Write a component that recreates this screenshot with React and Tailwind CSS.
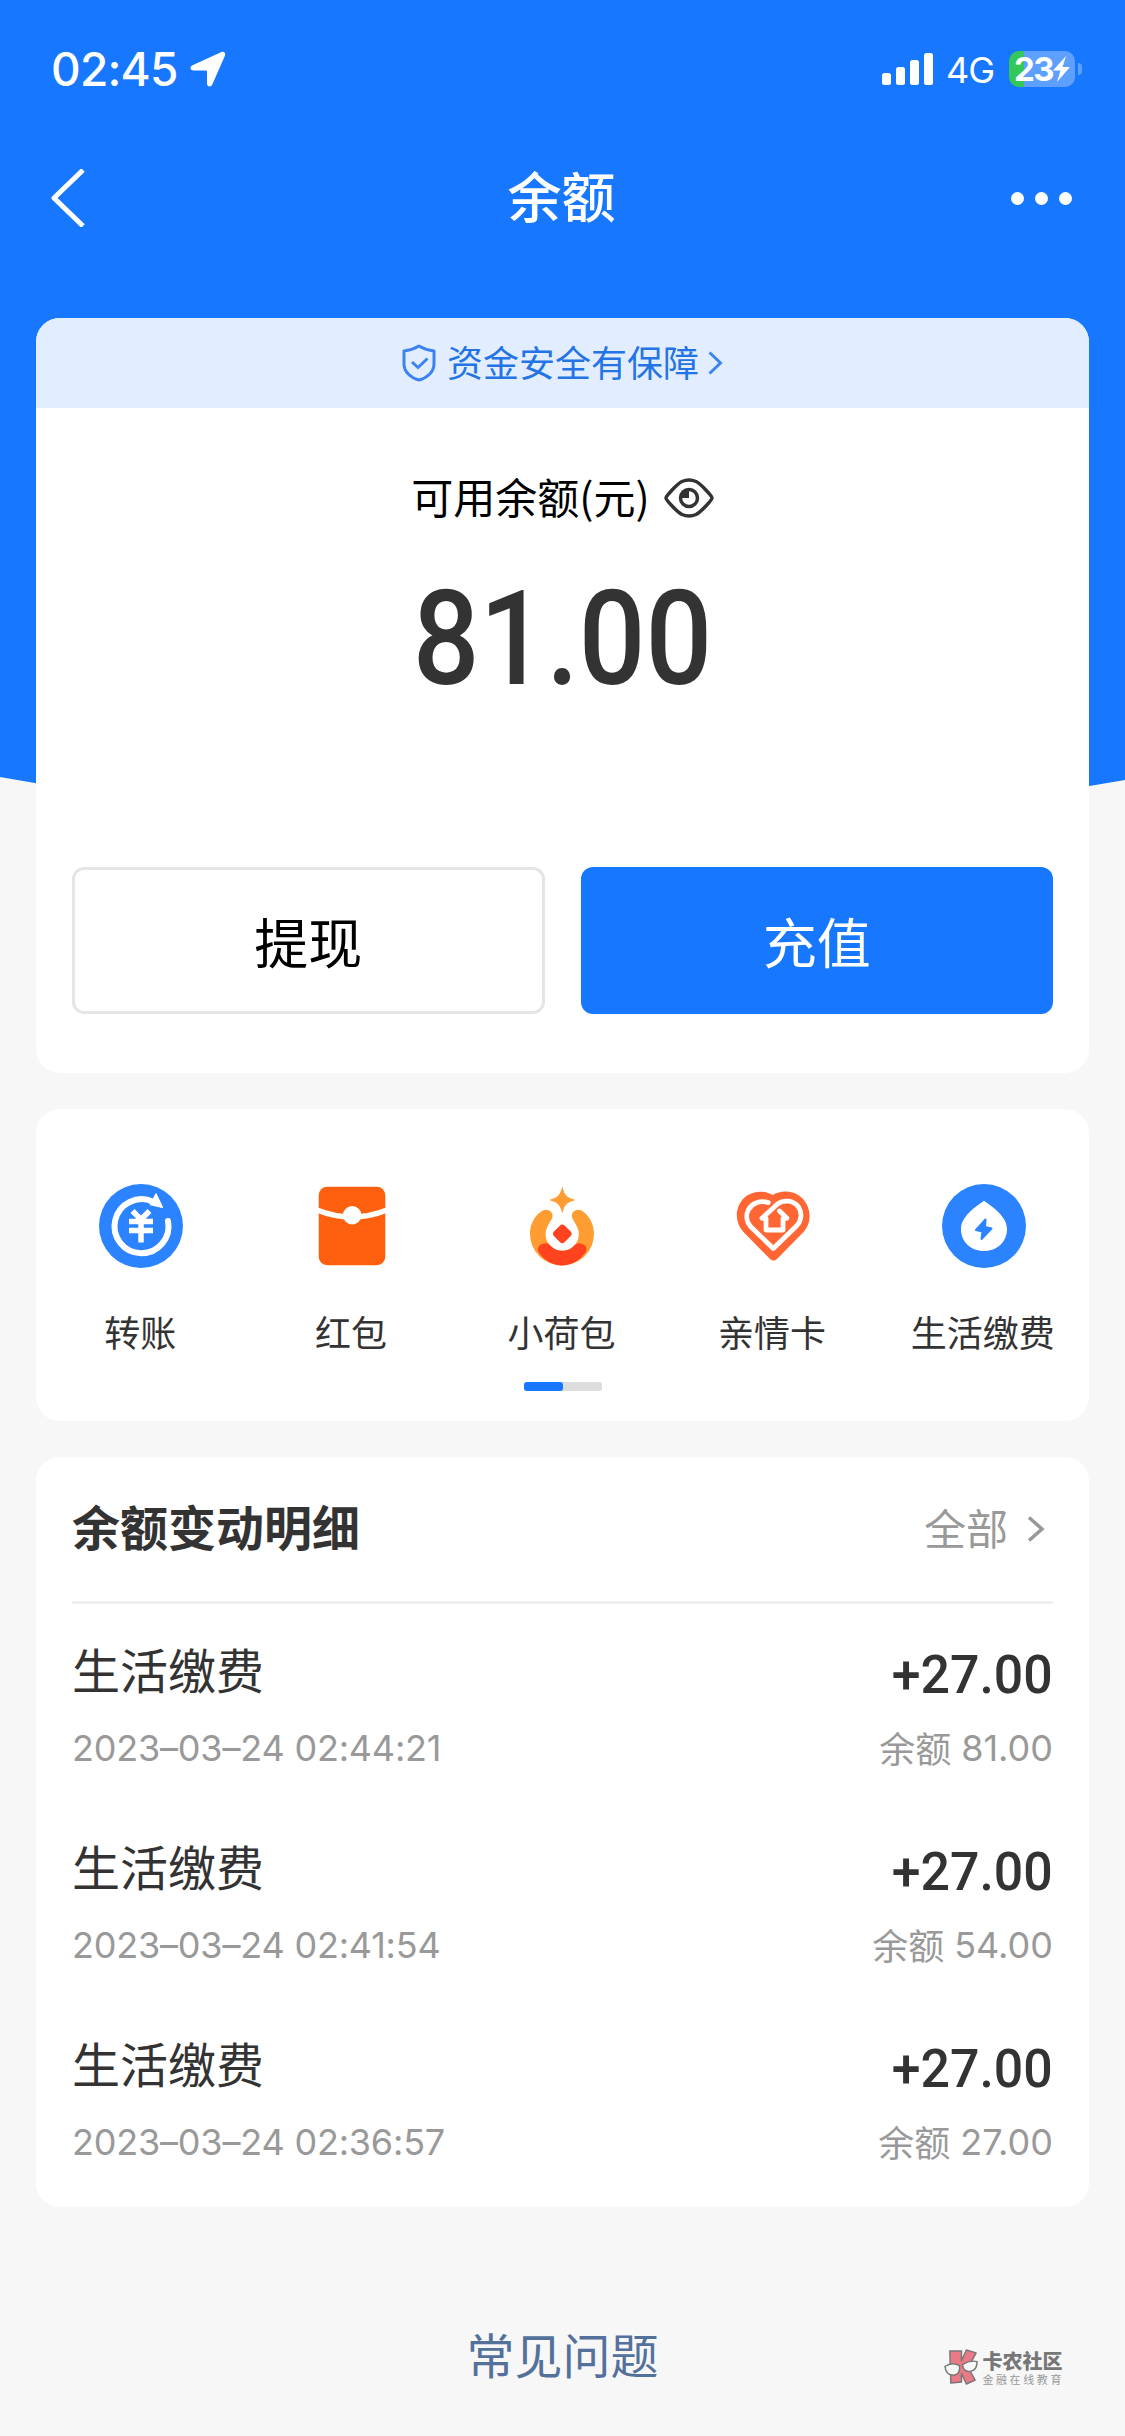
const records = [
  { id: 1, title: "生活缴费", time: "2023–03–24 02:44:21", amount: "+27.00", balance: "81.00" },
  { id: 2, title: "生活缴费", time: "2023–03–24 02:41:54", amount: "+27.00", balance: "54.00" },
  { id: 3, title: "生活缴费", time: "2023–03–24 02:36:57", amount: "+27.00", balance: "27.00" },
];

const TransferIcon = () => (
  <svg className="w-[84px] h-[84px]" viewBox="0 0 84 84" fill="none">
    <circle cx="42" cy="42" r="42" fill="#2b83ff" />
    <path d="M69 37A27 27 0 1 1 54 17.8" stroke="#fff" strokeWidth="6" strokeLinecap="round" />
    <path d="M57 10L63.3 23.3L51.5 20.5Z" fill="#fff" stroke="#fff" strokeWidth="1.5" strokeLinejoin="round" />
    <path d="M33.5 27L42 35.5L50.5 27M30 37.5H54M30 46.5H54M42 35V58.5" stroke="#fff" strokeWidth="5.5" />
  </svg>
);

const PacketIcon = () => (
  <svg className="w-[84px] h-[84px]" viewBox="0 0 84 84" fill="none">
    <rect x="8.7" y="2.7" width="66.6" height="78.5" rx="8.5" fill="#ff6010" />
    <path d="M7 26Q42 40 77 26" stroke="#fff" strokeWidth="5.5" />
    <circle cx="42.2" cy="31.2" r="9.2" fill="#fff" />
  </svg>
);

const PouchIcon = () => (
  <svg className="w-[84px] h-[84px]" viewBox="0 0 84 84" fill="none">
    <path
      d="M42.3 2.5C44.5 11.5 46.5 13.5 55.5 16C46.500 18.500 44.500 20.500 42.300 29.500C40 20.500 38 18.500 29 16C38 13.500 40 11.500 42.300 2.500Z"
      fill="#ff9d33"
    />
    <path
      d="M26 25.8C31 26 34 30 32 34.5C31 37 29 39 27.8 42A16.6 16.6 0 1 0 56.6 42C55.4 39 53.5 37 52.5 34.5C50.5 30 53.5 26 58.5 25.8C64 26 74 36 74 50A32 31.5 0 0 1 10 50C10 36 20 26 26 25.8Z"
      fill="#ff9d33"
    />
    <path
      d="M24 59.5C27 59 28.8 60 30.3 61.6A16.6 16.6 0 0 0 54.3 61.6C56 60 58 59 60.5 59.5C65.5 60.3 67.8 64 65.8 68C60 76.5 51 81.4 42 81.4S24 76.5 18.5 68C16.8 64 19 60.3 24 59.5Z"
      fill="#ff431f"
    />
    <rect x="34.8" y="42.3" width="15" height="15" rx="3.5" transform="rotate(45 42.3 49.8)" fill="#ff431f" />
  </svg>
);

const HeartIcon = () => (
  <svg className="w-[84px] h-[84px]" viewBox="0 0 84 84" fill="none">
    <path
      d="M41.5 11C49 6.5 60 6 68 11.5C80 20 82 37 73 47.5L46 75Q42.5 78 39 75L12 47.5C2.5 37 4 20 16 11.5C24 6.5 34 6.5 41.5 11Z"
      fill="#ff6633"
    />
    <path
      d="M37.3 18.6C29 16 21 19 17.5 25.5C14.5 31.5 15.5 38 19.5 42.5L42.3 64.5L65.5 42C70.5 36.5 71.5 29 67.5 23C62.5 16 52.5 15.500 46.5 20L31 34.3H35V46H52V34.3H56L48.5 27"
      stroke="#fff"
      strokeWidth="4.8"
      strokeLinecap="round"
      strokeLinejoin="round"
    />
  </svg>
);

const UtilityIcon = () => (
  <svg className="w-[84px] h-[84px]" viewBox="0 0 84 84" fill="none">
    <circle cx="42" cy="42" r="42" fill="#2b83ff" />
    <path d="M42 16.7C50 22.5 65 32 65 45C65 58 55 67 42 67S19 58 19 45C19 32 34 22.5 42 16.7Z" fill="#fff" />
    <path
      d="M43.5 35.5L34 46L40.5 47.5L39.5 55L49.5 44.5L43 43Z"
      fill="#2b83ff"
      stroke="#2b83ff"
      strokeWidth="2"
      strokeLinejoin="round"
    />
  </svg>
);

const services = [
  { name: "转账", Icon: TransferIcon },
  { name: "红包", Icon: PacketIcon },
  { name: "小荷包", Icon: PouchIcon },
  { name: "亲情卡", Icon: HeartIcon },
  { name: "生活缴费", Icon: UtilityIcon },
];

const StatusBar = () => (
  <div className="flex h-[138px] items-center justify-between pl-[51px] pr-[43px] text-white">
    <div className="flex items-center gap-[12px]">
      <span className="font-['Inter'] text-[46px] leading-none font-medium tracking-[-0.8px]">02:45</span>
      <svg className="w-[36px] h-[36px]" viewBox="0 0 36 36" fill="#fff">
        <path d="M31 1.2C34 0 36 2 34.8 5L22.3 33.5C21 36.5 17 36 17 32.5V20.5Q17 19.5 16 19.5H3.5C0 19.5 -.5 15.5 2.5 14.2Z" />
      </svg>
    </div>
    <div className="flex items-center">
      <svg className="w-[52px] h-[32px]" viewBox="0 0 52 32" fill="#fff">
        <rect x="0" y="20" width="9" height="12" rx="2.5" />
        <rect x="14" y="14" width="9" height="18" rx="2.5" />
        <rect x="28" y="7" width="9" height="25" rx="2.5" />
        <rect x="42" y="0" width="9" height="32" rx="2.5" />
      </svg>
      <span className="ml-[12px] mt-[2px] w-[49px] font-['Inter'] text-[36px] leading-none tracking-[-1px]">4G</span>
      <div className="ml-[14px] flex h-[36px] w-[66px] items-center justify-center rounded-[10px] bg-linear-to-r from-[#34c759] from-[23%] to-[#5da0ff] to-[23%]">
        <span className="font-['Inter'] text-[33px] leading-none font-bold tracking-[-1.5px]">23</span>
        <svg className="w-[17px] h-[26px]" viewBox="0 0 17 26" fill="#fff">
          <path d="M13 0L0 14.5H7.5L4 26L17 11H9.5Z" />
        </svg>
      </div>
      <div className="ml-[3px] h-[12px] w-[4px] rounded-r-full bg-[#5da0ff]" />
    </div>
  </div>
);

const NavBar = () => (
  <div className="flex h-[120px] items-center justify-between pl-[50px] pr-[53px] text-white">
    <svg className="w-[62px] h-[58px]" viewBox="0 0 62 58" fill="none">
      <path d="M33 1L4 29L33 57" stroke="#fff" strokeWidth="5" strokeLinejoin="round" />
    </svg>
    <h1 className="-mt-[6px] text-[54px] leading-none font-medium">余额</h1>
    <div className="flex gap-[11px]">
      <i className="size-[13px] rounded-full bg-white" />
      <i className="size-[13px] rounded-full bg-white" />
      <i className="size-[13px] rounded-full bg-white" />
    </div>
  </div>
);

const BalanceCard = () => (
  <section className="h-[755px] overflow-hidden rounded-[24px] bg-white">
    <div className="flex h-[90px] items-center justify-center bg-[#e2eeff] text-[#2474e5]">
      <svg className="mr-[11px] w-[34px] h-[38px]" viewBox="0 0 34 38" fill="none" stroke="#3d82f2" strokeWidth="3">
        <path d="M17 2C12 5 7 6.5 2 7V20C2 28 9 34 17 36C25 34 32 28 32 20V7C27 6.5 22 5 17 2Z" strokeLinejoin="round" />
        <path d="M10 18L16 23.5L25.5 14.5" />
      </svg>
      <span className="-mt-[4px] text-[36px] leading-none">资金安全有保障</span>
      <svg className="ml-[9px] w-[15px] h-[24px]" viewBox="0 0 15 24" fill="none">
        <path d="M1.5 1.5L12.5 12L1.5 22.5" stroke="#3d82f2" strokeWidth="3" />
      </svg>
    </div>
    <div className="mt-[69px] flex h-[42px] items-center justify-center gap-[14px] text-black">
      <span className="-mt-[4px] text-[42px] leading-[42px]">可用余额(元)</span>
      <svg className="w-[50px] h-[40px]" viewBox="0 0 50 40" fill="none">
        <path
          d="M2 20C2 18 13 6 18 3.5C22.5 1.5 27.5 1.5 32 3.5C37 6 48 18 48 20S37 34 32 36.5C27.5 38.5 22.5 38.5 18 36.5C13 34 2 22 2 20Z"
          stroke="#333"
          strokeWidth="3.5"
        />
        <circle cx="25" cy="20" r="8.5" stroke="#333" strokeWidth="3.5" />
        <path d="M25 11V20H16C16 14 19 11 25 11Z" fill="#333" />
      </svg>
    </div>
    <div className="mt-[54px] scale-x-[0.89] text-center font-['Roboto'] text-[132px] leading-[132px] font-medium text-[#333]">
      81.00
    </div>
    <div className="mt-[162px] grid grid-cols-2 gap-[36px] px-[36px]">
      <button className="h-[147px] rounded-[12px] border-3 border-[#e5e5e5] text-[54px] text-black">提现</button>
      <button className="h-[147px] rounded-[12px] bg-[#1777ff] text-[54px] text-white">充值</button>
    </div>
  </section>
);

const ServiceCard = () => (
  <section className="flex h-[312px] flex-col items-center rounded-[24px] bg-white pt-[75px]">
    <div className="grid w-full grid-cols-5">
      {services.map(({ name, Icon }) => (
        <div key={name} className="flex flex-col items-center gap-[45px]">
          <Icon />
          <span className="mr-[2px] text-[36px] leading-[36px] text-[#333]">{name}</span>
        </div>
      ))}
    </div>
    {/* scroll indicator */}
    <div className="mt-[33px] h-[9px] w-[78px] rounded-[3px] bg-[#ddd]">
      <div className="h-full w-1/2 rounded-[3px] bg-[#1777ff]" />
    </div>
  </section>
);

const HistoryCard = () => (
  <section className="h-[750px] rounded-[24px] bg-white px-[36px]">
    <div className="flex h-[147px] items-center justify-between border-b-3 border-[#eee]">
      <h2 className="-mt-[8px] text-[48px] leading-none font-bold text-[#333]">余额变动明细</h2>
      <div className="flex items-center pr-[8px] text-[#999]">
        <span className="-mt-[5px] text-[42px] leading-none">全部</span>
        <svg className="ml-[19px] w-[18px] h-[26px]" viewBox="0 0 18 26" fill="none">
          <path d="M2 1.5L15 13L2 24.5" stroke="#999" strokeWidth="3.5" />
        </svg>
      </div>
    </div>
    {records.map((item) => (
      <div key={item.id} className="flex h-[197px] flex-col pt-[43px]">
        <div className="flex h-[56px] items-center justify-between text-[#333]">
          <span className="-mt-[14px] text-[48px] leading-none">{item.title}</span>
          <span className="origin-right scale-x-[0.96] font-['Roboto'] text-[54px] leading-none font-medium">
            {item.amount}
          </span>
        </div>
        <div className="mt-[27px] flex h-[36px] items-center justify-between text-[36px] leading-none text-[#999]">
          <span className="font-['Inter'] tracking-[-0.2px]">{item.time}</span>
          <span className="flex items-center gap-[10px]">
            <span className="-mt-[3px]">余额</span>
            <span className="font-['Inter']">{item.balance}</span>
          </span>
        </div>
      </div>
    ))}
  </section>
);

const Watermark = () => (
  <div className="absolute right-[61px] bottom-[50px] flex items-center gap-[3px]">
    <svg className="w-[35px] h-[37px]" viewBox="0 0 36 38" fill="#ea7a85" stroke="#777" strokeWidth="1.5">
      <path d="M6 2L18 2L18 12L23 1L33 4L25 19L32 32L23 36L18 25L18 34L7 35Z" strokeLinejoin="round" />
      <path d="M1 18Q8 13 16 17Q17 26 10 27Q2 27 1 18Z" fill="#f7f7f7" />
      <path d="M19 16Q27 11 34 13Q34 22 27 23Q20 24 19 16Z" fill="#f7f7f7" />
    </svg>
    <div className="flex flex-col gap-[2px]">
      <span className="text-[20px] leading-[20px] font-black text-[#777]">卡农社区</span>
      <span className="text-[11px] leading-[12px] tracking-[2.6px] text-[#999]">金融在线教育</span>
    </div>
  </div>
);

export default function App() {
  return (
    <div className="relative isolate h-[2436px] w-[1125px] overflow-hidden bg-[#f7f7f7] font-['Noto_Sans_CJK_SC',sans-serif]">
      {/* curved blue backdrop */}
      <svg className="absolute inset-x-0 top-0 -z-10 w-[1125px] h-[900px]" viewBox="0 0 1125 900">
        <path d="M0 0H1125V780Q562 880 0 777Z" fill="#1777ff" />
      </svg>
      <StatusBar />
      <NavBar />
      <main className="mt-[60px] flex flex-col gap-[36px] px-[36px]">
        <BalanceCard />
        <ServiceCard />
        <HistoryCard />
      </main>
      <footer className="mt-[122px] text-center text-[48px] leading-[48px] text-[#54719b]">常见问题</footer>
      <Watermark />
    </div>
  );
}
